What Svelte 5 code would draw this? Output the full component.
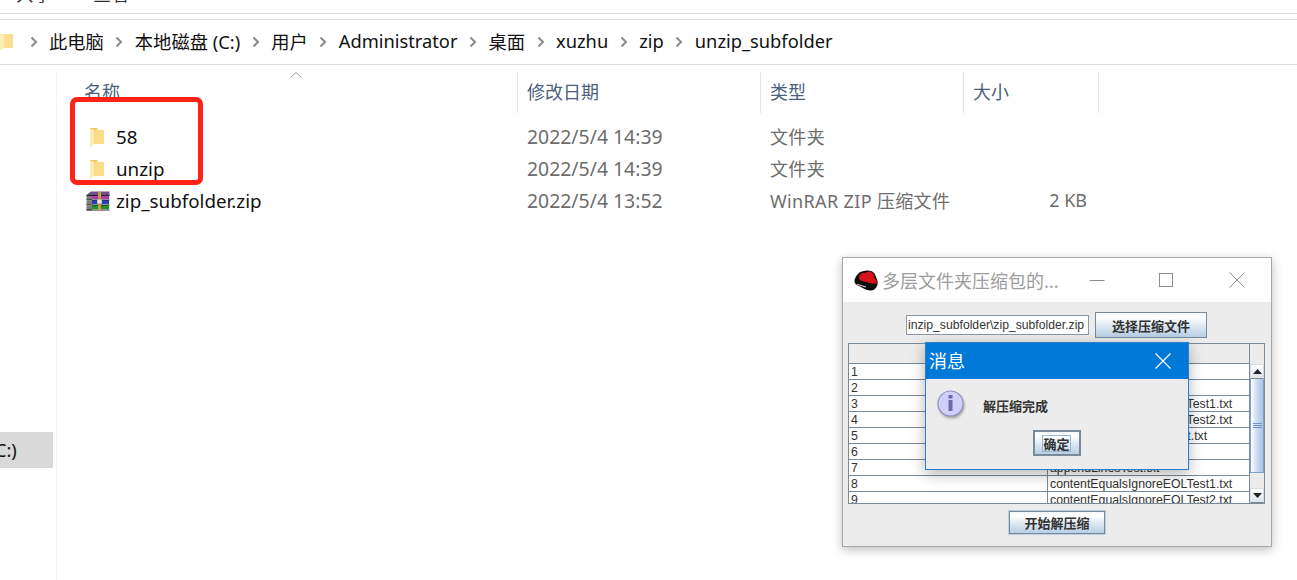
<script lang="ts">
	const crumbs = ['此电脑', '本地磁盘 (C:)', '用户', 'Administrator', '桌面', 'xuzhu', 'zip', 'unzip_subfolder'];
	const columns = ['名称', '修改日期', '类型', '大小'];
	const files = [
		{ name: '58', icon: 'folder', date: '2022/5/4 14:39', type: '文件夹', size: '' },
		{ name: 'unzip', icon: 'folder', date: '2022/5/4 14:39', type: '文件夹', size: '' },
		{ name: 'zip_subfolder.zip', icon: 'rar', date: '2022/5/4 13:52', type: 'WinRAR ZIP 压缩文件', size: '2 KB' }
	];
	const rows = [
		'',
		'',
		'contentEqualsIgnoreEOLTest1.txt',
		'contentEqualsIgnoreEOLTest2.txt',
		'moveFilesToDirectoryTest.txt',
		'',
		'appendLinesTest.txt',
		'contentEqualsIgnoreEOLTest1.txt',
		'contentEqualsIgnoreEOLTest2.txt'
	];
</script>

{#snippet folder()}
	<svg class="ficon" viewBox="0 0 16 21" width="16" height="21">
		<path d="M1 1 H8 L9 3 H15 V17 H4 L1 20 Z" fill="#f0c860" />
		<path d="M1 1.500 L5.500 3 V17 L1 20 Z" fill="#fdebb0" />
		<path d="M5.500 3 H15 V17 H5.500 Z" fill="#fadc88" />
	</svg>
{/snippet}

<div class="screen">
	<header class="ribbon">
		<span>共享</span>
		<span>查看</span>
	</header>

	<nav class="address">
		<svg class="crumb-folder" viewBox="0 0 14 20" width="14" height="20">
			<path d="M0 2 H13 V16 H4 L0 18 Z" fill="#fbdf8e" />
			<path d="M0 2 H4 V16 L0 18 Z" fill="#fdeeb8" />
		</svg>
		{#each crumbs as crumb}
			<svg class="chev" viewBox="0 0 8 12" width="8" height="12">
				<path d="M1.500 1.500 L6 6 L1.500 10.500" fill="none" stroke="#8a8a8a" stroke-width="2" />
			</svg>
			<span class="crumb">{crumb}</span>
		{/each}
	</nav>

	<div class="body">
		<aside class="sidebar">
			<div class="drive">C:)</div>
		</aside>

		<main class="list">
			<div class="sort">
				<svg viewBox="0 0 12 6" width="12" height="6">
					<path d="M0.500 5.500 L6 0.500 L11.500 5.500" fill="none" stroke="#9a9a9a" stroke-width="1" />
				</svg>
			</div>
			<div class="head">
				{#each columns as col}
					<div class="hcell">{col}</div>
				{/each}
			</div>
			{#each files as f}
				<div class="row">
					<div class="name">
						{#if f.icon === 'folder'}
							{@render folder()}
						{:else}
							<svg class="ricon" viewBox="0 0 24 20" width="24" height="20">
								<path d="M0.500 4 L5 0.500 H23.500 V5 L20 6 H1 Z" fill="#6d4f8c" />
								<path d="M6 4 H23 V8 H6 Z" fill="#b03bb0" />
								<path d="M6 9 H23 V13 H6 Z" fill="#2240c4" />
								<path d="M6 14 H23 V18 H6 Z" fill="#1c9428" />
								<path d="M0.500 5 H6 V9 H0.500 Z M0.500 10 H6 V14 H0.500 Z M0.500 15 H6 V19.500 H0.500 Z" fill="#7c7c7c" />
								<path d="M0.500 4.500 H23.500 M0.500 9 H23.500 M0.500 14 H23.500 M0.500 19 H23.500" stroke="#222" stroke-width="1" />
								<rect x="12" y="0.500" width="3" height="19" fill="#c89c4c" />
								<rect x="11" y="8" width="5" height="5" fill="#ece4c8" stroke="#555" stroke-width="0.500" />
							</svg>
						{/if}
						<span>{f.name}</span>
					</div>
					<div class="cell date">{f.date}</div>
					<div class="cell type">{f.type}</div>
					<div class="cell size">{f.size}</div>
				</div>
			{/each}
		</main>
	</div>

	<div class="mark"></div>

	<section class="jwin">
		<div class="jtitle">
			<svg class="hat" viewBox="0 0 24 21" width="24" height="21">
				<path d="M0.500 11 C0.500 8 2 7 3 5 L6 2 C9 1 11 1 13 0.500 C18 0 21 3 22 7 C24 10 24 14 23 16 C22 19 19 21 16 20.500 C12 20 9 18 6 16.500 C3 15.500 0.500 14 0.500 11 Z" fill="#0c0c0c" />
				<path d="M5 8 C5 5 7 3 10 3 C12 3 13 1.500 15 1.500 C18 1.500 20 4 20.500 8 C22.500 9.500 23.500 11.500 22.500 13.500 C19 14 15 13 12 12 C9 11 5 11 5 8 Z" fill="#d5121a" />
				<path d="M3 14.500 C7 15 9 16.500 12 17" stroke="#fff" stroke-width="0.900" fill="none" />
			</svg>
			<span class="jname">多层文件夹压缩包的...</span>
			<svg class="wbtn min" viewBox="0 0 16 16" width="16" height="16"><path d="M0.500 8.500 H15.500" stroke="#8c8c8c" /></svg>
			<svg class="wbtn max" viewBox="0 0 16 16" width="16" height="16"><rect x="1.500" y="1.500" width="13" height="13" fill="none" stroke="#8c8c8c" /></svg>
			<svg class="wbtn close" viewBox="0 0 16 16" width="16" height="16"><path d="M0.500 0.500 L15.500 15.500 M15.500 0.500 L0.500 15.500" stroke="#8c8c8c" /></svg>
		</div>
		<div class="jbody">
			<div class="picker">
				<input class="path" value="inzip_subfolder\zip_subfolder.zip" readonly />
				<button class="jbtn pick">选择压缩文件</button>
			</div>
			<div class="tablewrap">
				<div class="table">
					<div class="thead"><div></div><div></div></div>
					{#each rows as r, i}
						<div class="tr">
							<div class="td">{i + 1}</div>
							<div class="td">{r}</div>
						</div>
					{/each}
				</div>
				<div class="scroll">
					<div class="corner"></div>
					<div class="arrow"><svg viewBox="0 0 9 5" width="9" height="5"><path d="M0 5 L4.500 0 L9 5 Z" fill="#222" /></svg></div>
					<div class="track">
						<div class="thumb"><i></i><i></i><i></i></div>
					</div>
					<div class="arrow"><svg viewBox="0 0 9 5" width="9" height="5"><path d="M0 0 L4.500 5 L9 0 Z" fill="#222" /></svg></div>
				</div>
			</div>
			<div class="start"><button class="jbtn go">开始解压缩</button></div>
		</div>
	</section>

	<section class="dialog">
		<div class="dtitle">
			<span>消息</span>
			<svg viewBox="0 0 16 16" width="16" height="16"><path d="M0.500 0.500 L15.500 15.500 M15.500 0.500 L0.500 15.500" stroke="#fff" stroke-width="1.200" /></svg>
		</div>
		<div class="dbody">
			<div class="msg">
				<svg class="info" viewBox="0 0 30 30" width="30" height="30">
					<circle cx="14.500" cy="14.500" r="12.500" fill="#cfcffa" stroke="#8f8fc4" stroke-width="1.200" />
					<rect x="12.500" y="6" width="4" height="3.500" fill="#6b6ba8" />
					<rect x="12.500" y="11" width="4" height="11" fill="#6b6ba8" />
				</svg>
				<span>解压缩完成</span>
			</div>
			<div class="ok"><button class="jbtn okb"><span>确定</span></button></div>
		</div>
	</section>
</div>

<style>
	:global(body) {
		margin: 0;
		background: #fff;
	}

	.screen {
		position: relative;
		width: 1297px;
		height: 580px;
		overflow: hidden;
		background: #fff;
		font-family: 'Noto Sans', 'Noto Sans CJK SC', sans-serif;
		color: #111;
	}

	.ribbon {
		display: flex;
		gap: 41px;
		height: 13px;
		padding-left: 16px;
		border-bottom: 1px solid #dcdcdc;
		overflow: hidden;
		font-size: 18px;
		line-height: 18px;
		color: #333;
	}

	.ribbon span {
		margin-top: -15px;
	}

	.address {
		display: flex;
		align-items: center;
		gap: 11.500px;
		height: 44px;
		box-sizing: content-box;
		margin-top: 5px;
		border-top: 1px solid #dcdcdc;
		border-bottom: 1px solid #dcdcdc;
		font-size: 18.300px;
	}

	.crumb {
		margin-top: -3px;
	}

	.crumb-folder {
		margin-right: 4px;
	}

	.chev {
		flex: none;
	}

	.body {
		display: flex;
		height: 515px;
	}

	.sidebar {
		width: 53px;
		margin-right: 3px;
		padding-top: 367px;
		flex: none;
	}

	.drive {
		height: 36px;
		line-height: 36px;
		background: #d9d9d9;
		text-indent: -5px;
		overflow: hidden;
		font-size: 18px;
	}

	.list {
		flex: 1;
		margin-top: 7px;
		border-left: 1px solid #f2f2f2;
		position: relative;
	}

	.sort {
		position: absolute;
		left: 233px;
		top: 0;
		line-height: 0;
	}

	.head {
		display: grid;
		grid-template-columns: 461px 243px 203px 135px;
		height: 40px;
		font-size: 18px;
		color: #4c607a;
	}

	.hcell {
		padding-left: 27px;
		border-right: 1px solid #e5e5e5;
		line-height: 41px;
	}

	.hcell:not(:first-child) {
		padding-left: 9px;
	}

	.row {
		display: grid;
		grid-template-columns: 460px 243px 203px 124px;
		height: 32px;
		align-items: center;
		font-size: 18px;
		position: relative;
		top: 9px;
	}

	.name {
		display: flex;
		align-items: center;
		padding-left: 29px;
		gap: 11px;
		font-size: 18.800px;
	}

	.name :global(.ficon) {
		margin-left: 3px;
	}

	.ricon {
		margin-right: -5px;
	}

	.cell {
		padding-left: 10px;
		margin-bottom: 2px;
		color: #6d6d6d;
	}

	.date {
		font-size: 19.400px;
	}

	.type {
		letter-spacing: 0.350px;
	}

	.size {
		text-align: right;
	}

	.mark {
		position: absolute;
		left: 70px;
		top: 97px;
		width: 123px;
		height: 78px;
		border: 5px solid #ff2216;
		border-radius: 7px;
	}

	.jwin {
		position: absolute;
		left: 842px;
		top: 257px;
		width: 428px;
		height: 288px;
		border: 1px solid #a6a6a6;
		box-shadow: 0 3px 10px rgba(0, 0, 0, 0.25);
		background: #ececec;
		display: flex;
		flex-direction: column;
		font-family: 'Liberation Sans', 'Noto Sans CJK SC', sans-serif;
	}

	.jtitle {
		height: 44px;
		background: #fff;
		display: flex;
		align-items: center;
		padding-left: 11px;
		font-family: 'Noto Sans', 'Noto Sans CJK SC', sans-serif;
	}

	.jname {
		margin-left: 4px;
		width: 190px;
		font-size: 18px;
		color: #9c9c9c;
		white-space: nowrap;
	}

	.wbtn {
		flex: none;
	}

	.min {
		margin-left: 17px;
	}

	.max {
		margin-left: 53px;
	}

	.close {
		margin-left: 55px;
	}

	.jbody {
		flex: 1;
		padding: 10px 5px 0 5px;
		display: flex;
		flex-direction: column;
	}

	.picker {
		display: flex;
		align-items: center;
		height: 26px;
		padding-left: 58px;
		gap: 6px;
	}

	.path {
		box-sizing: border-box;
		width: 183px;
		height: 20px;
		border: 1px solid #8a99a8;
		padding: 0 1px;
		font-family: inherit;
		font-size: 12.200px;
		color: #333;
		background: #fff;
	}

	.jbtn {
		box-sizing: border-box;
		border: 1px solid #7a8a99;
		background: linear-gradient(#f4f7fa 0%, #ffffff 20%, #dde7f1 55%, #b8cfe5 100%);
		font-family: 'Noto Sans CJK SC', sans-serif;
		font-weight: 700;
		font-size: 13px;
		color: #333;
		padding: 0;
	}

	.pick {
		width: 112px;
		height: 26px;
	}

	.tablewrap {
		display: flex;
		height: 161px;
		margin-top: 5px;
		border-bottom: 1px solid #7a8a99;
		overflow: hidden;
		width: 417px;
		box-sizing: border-box;
	}

	.table {
		width: 402px;
		box-sizing: border-box;
		border-left: 1px solid #7a8a99;
		border-top: 1px solid #7a8a99;
		background: #fff;
		flex: none;
	}

	.thead {
		height: 19px;
		background: #ececec;
		border-bottom: 1px solid #7a8a99;
		display: grid;
		grid-template-columns: 1fr;
		border-right: 1px solid #7a8a99;
	}

	.tr {
		display: grid;
		grid-template-columns: 199px 1fr;
		height: 16px;
		box-sizing: border-box;
		border-bottom: 1px solid #7a8a99;
		border-right: 1px solid #7a8a99;
	}

	.td {
		font-size: 12.300px;
		line-height: 16px;
		padding-left: 2px;
		color: #333;
		white-space: nowrap;
		overflow: hidden;
	}

	.td:first-child {
		border-right: 1px solid #7a8a99;
	}

	.scroll {
		flex: 1;
		display: flex;
		flex-direction: column;
		border-top: 1px solid #7a8a99;
		border-right: 1px solid #7a8a99;
		box-sizing: border-box;
		background: #ececec;
	}

	.corner {
		height: 20px;
		flex: none;
	}

	.arrow {
		height: 15px;
		flex: none;
		display: flex;
		align-items: center;
		justify-content: center;
		background: linear-gradient(#fff, #dde3ea);
		box-sizing: border-box;
		border: 1px solid #d8dde3;
		border-bottom-color: #7a8a99;
	}

	.track {
		flex: 1;
	}

	.thumb {
		height: 94px;
		box-sizing: border-box;
		border: 1px solid #7f9fd0;
		border-top: none;
		background: linear-gradient(90deg, #fff 0%, #cfdff0 45%, #a9c4e4 100%);
		display: flex;
		flex-direction: column;
		gap: 1px;
		align-items: center;
		justify-content: center;
	}

	.thumb i {
		display: block;
		width: 9px;
		height: 1px;
		background: #6f8fc8;
	}

	.start {
		display: flex;
		justify-content: center;
		margin-top: 6px;
	}

	.go {
		width: 98px;
		height: 25px;
		border: 2px solid #7a8a99;
		outline: 1px solid #b8cfe5;
		outline-offset: -1px;
	}

	.dialog {
		position: absolute;
		left: 925px;
		top: 342px;
		width: 262px;
		height: 126px;
		border: 1px solid #2a7fd0;
		background: #ececec;
		box-shadow: 0 4px 14px rgba(0, 0, 0, 0.3);
		display: flex;
		flex-direction: column;
		font-family: 'Noto Sans CJK SC', sans-serif;
	}

	.dtitle {
		height: 36px;
		background: #0078d7;
		color: #fff;
		display: flex;
		align-items: center;
		justify-content: space-between;
		padding: 0 17px 0 3px;
		font-size: 18px;
		flex: none;
	}

	.dtitle span {
		margin-top: -3px;
	}

	.dbody {
		flex: 1;
		display: flex;
		flex-direction: column;
	}

	.msg {
		display: flex;
		align-items: center;
		height: 50px;
		padding-left: 10px;
		font-size: 13px;
		font-weight: 700;
		color: #333;
	}

	.info {
		filter: drop-shadow(1px 2px 1px rgba(0, 0, 0, 0.3));
		margin-right: 17px;
	}

	.msg span {
		margin-top: 3px;
	}

	.ok {
		display: flex;
		justify-content: center;
		margin-top: 1px;
		margin-left: -1px;
	}

	.okb {
		width: 48px;
		height: 26px;
		border: 2px solid #7a8a99;
		display: flex;
		align-items: center;
		justify-content: center;
	}

	.okb span {
		border: 1px solid #9fb5cb;
		padding: 0;
		line-height: 15px;
	}
</style>
